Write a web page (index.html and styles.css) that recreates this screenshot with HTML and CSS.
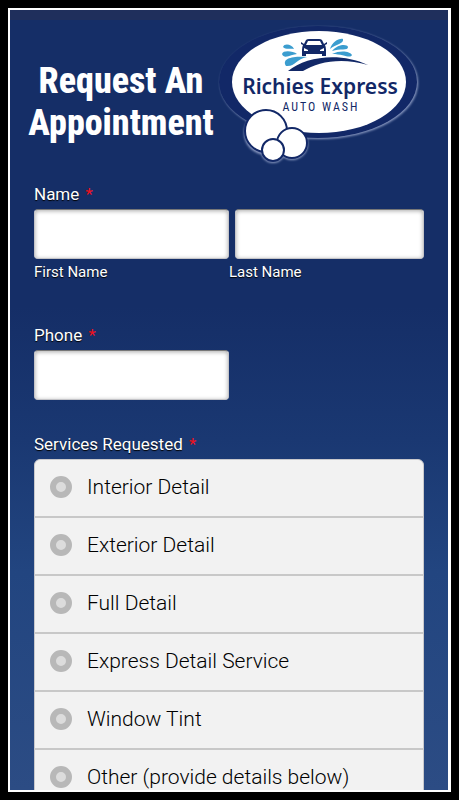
FILE: index.html
```html
<!DOCTYPE html>
<html lang="en">
<head>
<meta charset="utf-8">
<meta name="viewport" content="width=device-width, initial-scale=1">
<title>Request An Appointment</title>
<link rel="stylesheet" href="styles.css">
</head>
<body>
<main class="screen">
  <header class="banner">
    <h1 class="title">Request An Appointment</h1>
    <svg class="logo" viewBox="216 22 208 144" role="img" aria-label="Richies Express Auto Wash">
      <defs>
        <filter id="glow" x="-10%" y="-10%" width="120%" height="120%"><feGaussianBlur stdDeviation="1"/></filter>
      </defs>
      <g fill="#8e9dc4" filter="url(#glow)">
        <ellipse cx="319" cy="83" rx="99" ry="56"/>
        <circle cx="266" cy="133" r="22"/>
        <circle cx="292" cy="144" r="16"/>
        <circle cx="273" cy="151" r="12"/>
      </g>
      <ellipse cx="318" cy="82" rx="99" ry="56" fill="#122867"/>
      <ellipse cx="319" cy="82" rx="87" ry="51" fill="#fff"/>
      <g fill="#fff" stroke="#122867" stroke-width="2">
        <circle cx="266" cy="131" r="21"/>
        <circle cx="292" cy="143" r="15"/>
        <circle cx="273" cy="150" r="11"/>
      </g>
      <g fill="#3b9dcf">
        <path d="M283 47C284 43 292 44 294 49C290 48 286 50 283 47Z"/>
        <path d="M282 54C283 50 293 51 297 54C292 54 284 60 282 54Z"/>
        <path d="M286 66C281 58 294 56 307 57C296 59 295 67 286 66Z"/>
        <path d="M330 49C332 42 339 38 343 39C344 44 336 44 330 49Z"/>
        <path d="M332 51C338 44 347 44 348 47C348 51 340 48 332 51Z"/>
        <path d="M332 54C340 50 350 51 352 55C350 59 344 54 332 54Z"/>
      </g>
      <g fill="#122867">
        <path d="M288 71C306 56 341 52 368 65C341 57 318 62 303 71Z"/>
        <path d="M306 40Q307 39 309 39H319Q321 39 322 40L324 44L327 42L327 44L325 45Q326 47 326 50V56H322V54H306V56H302V50Q302 47 303 45L301 44V42L304 44Z"/>
      </g>
      <g fill="#fff">
        <path d="M308 41H320L322 45H306Z"/>
        <path d="M304 48L308 50V51H304ZM324 48L320 50V51H324Z"/>
      </g>
      <text class="logo-name" x="320" y="94">Richies Express</text>
      <text class="logo-sub" x="321" y="111">AUTO WASH</text>
    </svg>
  </header>

  <form class="form">
    <fieldset class="group">
      <legend class="label">Name <span class="required">*</span></legend>
      <div class="names">
        <div class="name-part">
          <input class="box" id="first" type="text">
          <label class="hint" for="first">First Name</label>
        </div>
        <div class="name-part name-last">
          <input class="box" id="last" type="text">
          <label class="hint" for="last">Last Name</label>
        </div>
      </div>
    </fieldset>

    <div class="group phone">
      <label class="label" for="phone">Phone <span class="required">*</span></label>
      <input class="box" id="phone" type="tel">
    </div>

    <fieldset class="group">
      <legend class="label">Services Requested <span class="required">*</span></legend>
      <div class="options">
        <label class="option"><input class="radio" type="radio" name="service">Interior Detail</label>
        <label class="option"><input class="radio" type="radio" name="service">Exterior Detail</label>
        <label class="option"><input class="radio" type="radio" name="service">Full Detail</label>
        <label class="option"><input class="radio" type="radio" name="service">Express Detail Service</label>
        <label class="option"><input class="radio" type="radio" name="service">Window Tint</label>
        <label class="option"><input class="radio" type="radio" name="service">Other (provide details below)</label>
      </div>
    </fieldset>
  </form>
</main>
</body>
</html>
```
FILE: styles.css
```css
* {
  box-sizing: border-box;
}

body {
  margin: 0;
  height: 100vh;
  padding: 8px;
  background: #000;
  color: #fff;
  font-family: Roboto, "Liberation Sans", sans-serif;
}

.screen {
  height: 100%;
  overflow: hidden;
  border: 2px solid #fff;
  border-right-width: 3px;
  background: linear-gradient(#152e67 0%, #152e67 38%, #1a3872 55%, #224580 72%, #2c4c84 100%);
}

.banner {
  display: flex;
  align-items: flex-start;
  justify-content: space-between;
  padding: 2px 24px 0 16px;
  border-top: 10px solid #1f2f5c;
}

.title {
  flex: 1;
  margin: 38px 0 0;
  font: 800 36px/42px "Liberation Sans Narrow", "Arial Narrow", "Roboto Condensed", sans-serif;
  text-align: center;
}

.logo {
  flex: none;
  width: 208px;
  height: 144px;
}

.logo-name {
  fill: #122867;
  font: 600 21px "Noto Sans", "Open Sans", sans-serif;
  text-anchor: middle;
}

.logo-sub {
  fill: #122867;
  font: 400 12px "Roboto Condensed", Roboto, sans-serif;
  letter-spacing: 2px;
  text-anchor: middle;
}

.form {
  padding: 18px 24px 0;
}

.group {
  margin: 0 0 44px;
  padding: 0;
  border: 0;
}

.label {
  display: block;
  padding: 0;
  margin-bottom: 4px;
  font-size: 17px;
  line-height: 21px;
  text-shadow: 0 1px 1px #000;
}

.required {
  margin-left: 2px;
  color: #f0101c;
  text-shadow: none;
}

.names {
  display: grid;
  grid-template-columns: 1fr 1fr;
}

.name-last .box {
  width: calc(100% - 6px);
  margin-left: 6px;
}

.box {
  display: block;
  width: 100%;
  height: 50px;
  padding: 0 10px;
  border: 1px solid #c4c4c8;
  border-top-color: #777;
  border-radius: 4px;
  background: #fff;
  box-shadow: inset 0 1px 4px #aaa;
  font: inherit;
}

.phone {
  margin-bottom: 34px;
}

.phone .box {
  width: 50%;
}

.hint {
  display: block;
  margin-top: 4px;
  font-size: 15px;
  line-height: 18px;
  text-shadow: 0 1px 1px #000;
}

.options {
  border: 1px solid #c9c9cc;
  border-radius: 6px;
  overflow: hidden;
  background: #f2f2f2;
}

.option {
  display: flex;
  align-items: center;
  gap: 15px;
  height: 58px;
  padding: 0 15px 2px;
  border-bottom: 2px solid #c8c8c8;
  color: #000;
  font-size: 21px;
  font-weight: 300;
}

.radio {
  appearance: none;
  flex: none;
  width: 22px;
  height: 22px;
  margin: 0;
  border: 6px solid #b8b8b8;
  border-radius: 50%;
  background: #dcdcdc;
}
```
